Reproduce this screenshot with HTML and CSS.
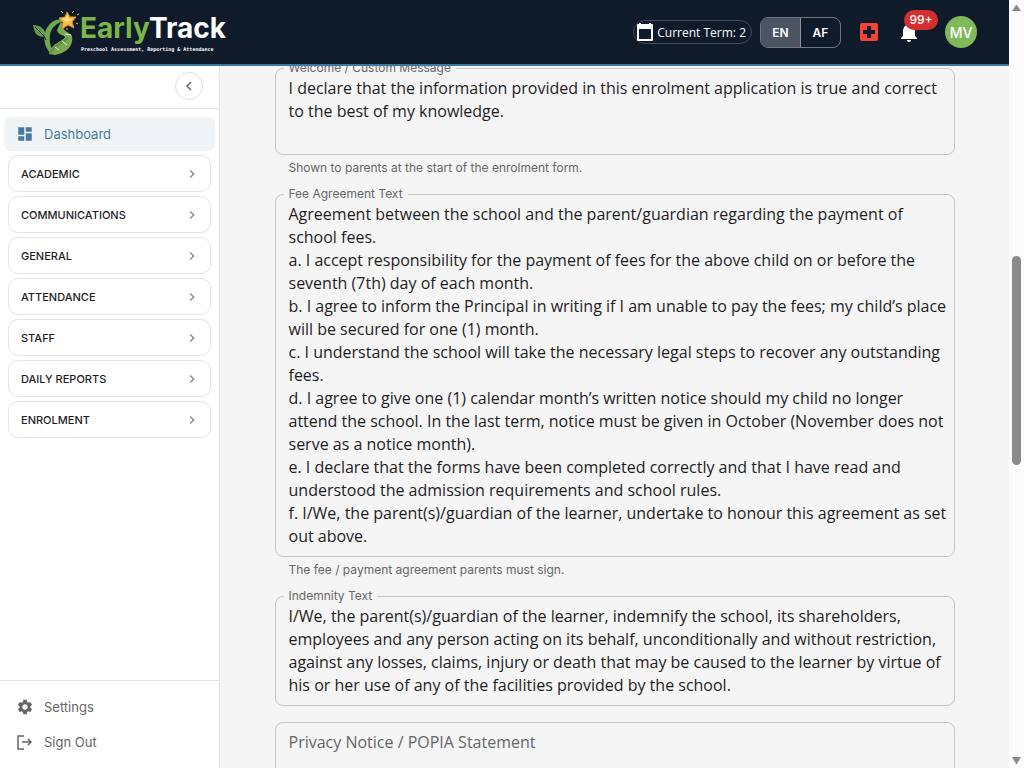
FILE: index.html
```
<!DOCTYPE html>
<html lang="en">
<head>
  <meta charset="UTF-8">
  <meta name="viewport" content="width=device-width, initial-scale=1">
  <title>EarlyTrack - Enrolment Settings</title>
  <link rel="stylesheet" href="styles.css">
</head>
<body>
  <div class="app">
    <header class="topbar">
      <a href="#" class="logo">
        <svg class="logo-mark" width="48" height="48" viewBox="0 0 48 48" aria-hidden="true">
          <path d="M19 46C11 38 10 25 17 17C20 13 25 11 31 11L32 13C24 15 19 20 18 27C17 34 19 41 23 46Z" fill="#6fa84f"/>
          <path d="M12 29C4 29 2 24 1 17C8 17 13 21 14 27Z" fill="#5f9c48"/>
          <path d="M3 19L12 28L14 32" fill="none" stroke="#12202c" stroke-width="1"/>
          <path d="M29 14L25 22C26 27 32 27 33 29C32 33 19 35 17 46L23 47C35 45 42 37 40 28C38 24 29 23 32 17Z" fill="#78a850"/>
          <path d="M19 45C21 36 34 35 36 29" fill="none" stroke="#5f8c47" stroke-width="2"/>
          <path d="M33 26L39 27M30 33L35 37M23 39L27 42" stroke="#e7eadf" stroke-width="1"/>
          <path d="M35 4L38 9L44 9L40 14L42 20L36 17L30 21L31 14L27 10L33 9Z" fill="#f5b944" stroke="#d98e2d" stroke-width="1" stroke-linejoin="round"/>
          <path d="M35 7L37 11L41 11L35 14L30 11L34 10Z" fill="#ffe18b"/>
          <path d="M29 3L31 5M42 3L40 5M44 15L46 16M35 20V22M45 7L47 6" stroke="#e9b847" stroke-width="1"/>
        </svg>
        <span class="logo-text">
          <span class="logo-name"><span class="logo-early">Early</span>Track</span>
          <span class="logo-tagline">Preschool Assessment, Reporting &amp; Attendance</span>
        </span>
      </a>

      <div class="topbar-actions">
        <button class="term" type="button">
          <svg width="18" height="20" viewBox="0 0 18 20" aria-hidden="true">
            <path d="M2 3H16V18H2Z" fill="none" stroke="#fff" stroke-width="2" stroke-linejoin="round"/>
            <path d="M1 3H17V7H1ZM3 1H5V4H3ZM13 1H15V4H13Z" fill="#fff"/>
          </svg>
          Current Term: 2
        </button>
        <div class="lang">
          <button type="button" class="active">EN</button>
          <button type="button">AF</button>
        </div>
        <button class="icon-button medical" type="button" aria-label="Medical">
          <svg width="24" height="24" viewBox="0 0 24 24">
            <path d="M19 3H5c-1.100 0-2 .9-2 2v14c0 1.100.9 2 2 2h14c1.100 0 2-.9 2-2V5c0-1.100-.9-2-2-2zm-1 11h-4v4h-4v-4H6v-4h4V6h4v4h4v4z" fill="#f44336"/>
          </svg>
        </button>
        <button class="icon-button bell" type="button" aria-label="Notifications">
          <svg width="24" height="24" viewBox="0 0 24 24">
            <path d="M12 22c1.100 0 2-.9 2-2h-4c0 1.100.89 2 2 2zm6-6v-5c0-3.070-1.640-5.640-4.500-6.320V4c0-.83-.67-1.500-1.500-1.500s-1.500.67-1.500 1.500v.68C7.630 5.360 6 7.920 6 11v5l-2 2v1h16v-1l-2-2z" fill="#fff"/>
          </svg>
          <span class="badge">99+</span>
        </button>
        <button class="avatar" type="button">MV</button>
      </div>
    </header>

    <div class="layout">
      <aside class="sidebar">
        <div class="sidebar-top">
          <button class="collapse" type="button" aria-label="Collapse menu">
            <svg width="16" height="16" viewBox="0 0 16 16"><path d="M10 4L6 8L10 12" fill="none" stroke="#666" stroke-width="1.500"/></svg>
          </button>
        </div>

        <nav class="menu">
          <a href="#" class="nav-link current">
            <svg width="18" height="18" viewBox="0 0 24 24"><path d="M3 13h8V3H3v10zm0 8h8v-6H3v6zm10 0h8V11h-8v10zm0-18v6h8V3h-8z" fill="#457b9d"/></svg>
            Dashboard
          </a>
          <button class="group" type="button">ACADEMIC <svg width="16" height="16" viewBox="0 0 24 24"><path d="M10 6L8.590 7.410 13.170 12l-4.580 4.590L10 18l6-6z"/></svg></button>
          <button class="group" type="button">COMMUNICATIONS <svg width="16" height="16" viewBox="0 0 24 24"><path d="M10 6L8.590 7.410 13.170 12l-4.580 4.590L10 18l6-6z"/></svg></button>
          <button class="group" type="button">GENERAL <svg width="16" height="16" viewBox="0 0 24 24"><path d="M10 6L8.590 7.410 13.170 12l-4.580 4.590L10 18l6-6z"/></svg></button>
          <button class="group" type="button">ATTENDANCE <svg width="16" height="16" viewBox="0 0 24 24"><path d="M10 6L8.590 7.410 13.170 12l-4.580 4.590L10 18l6-6z"/></svg></button>
          <button class="group" type="button">STAFF <svg width="16" height="16" viewBox="0 0 24 24"><path d="M10 6L8.590 7.410 13.170 12l-4.580 4.590L10 18l6-6z"/></svg></button>
          <button class="group" type="button">DAILY REPORTS <svg width="16" height="16" viewBox="0 0 24 24"><path d="M10 6L8.590 7.410 13.170 12l-4.580 4.590L10 18l6-6z"/></svg></button>
          <button class="group" type="button">ENROLMENT <svg width="16" height="16" viewBox="0 0 24 24"><path d="M10 6L8.590 7.410 13.170 12l-4.580 4.590L10 18l6-6z"/></svg></button>
        </nav>

        <div class="sidebar-bottom">
          <a href="#" class="nav-link">
            <svg width="18" height="18" viewBox="0 0 24 24"><path fill="#666" d="M19.140 12.940c.04-.3.06-.61.06-.94 0-.32-.02-.64-.07-.94l2.030-1.580c.18-.14.23-.41.12-.61l-1.920-3.320c-.12-.22-.37-.29-.59-.22l-2.390.96c-.5-.38-1.030-.7-1.620-.94l-.36-2.540c-.04-.24-.24-.41-.48-.41h-3.840c-.24 0-.43.17-.47.41l-.36 2.540c-.59.24-1.130.57-1.620.94l-2.390-.96c-.22-.08-.47 0-.59.22L2.740 8.870c-.12.21-.08.47.12.61l2.030 1.580c-.05.3-.09.63-.09.94s.02.64.07.94l-2.030 1.580c-.18.14-.23.41-.12.61l1.920 3.320c.12.22.37.29.59.22l2.390-.96c.5.38 1.030.7 1.620.94l.36 2.540c.05.24.24.41.48.41h3.840c.24 0 .44-.17.47-.41l.36-2.540c.59-.24 1.130-.56 1.620-.94l2.390.96c.22.08.47 0 .59-.22l1.920-3.320c.12-.22.07-.47-.12-.61l-2.010-1.580zM12 15.600c-1.980 0-3.600-1.620-3.600-3.600s1.620-3.600 3.600-3.600 3.600 1.620 3.600 3.600-1.620 3.600-3.600 3.600z"/></svg>
            Settings
          </a>
          <a href="#" class="nav-link">
            <svg width="18" height="18" viewBox="0 0 18 18"><path d="M8 3H2V16H8M6 9H15M12 6L15 9L12 12" fill="none" stroke="#666" stroke-width="1.500"/></svg>
            Sign Out
          </a>
        </div>
      </aside>

      <main class="content">
        <form class="form">
          <div class="field">
            <label for="welcome">Welcome / Custom Message</label>
            <textarea id="welcome" rows="3">I declare that the information provided in this enrolment application is true and correct to the best of my knowledge.</textarea>
            <p class="help">Shown to parents at the start of the enrolment form.</p>
          </div>
          <div class="field">
            <label for="fees">Fee Agreement Text</label>
            <textarea id="fees" rows="15">Agreement between the school and the parent/guardian regarding the payment of school fees.
a. I accept responsibility for the payment of fees for the above child on or before the seventh (7th) day of each month.
b. I agree to inform the Principal in writing if I am unable to pay the fees; my child’s place will be secured for one (1) month.
c. I understand the school will take the necessary legal steps to recover any outstanding fees.
d. I agree to give one (1) calendar month’s written notice should my child no longer attend the school. In the last term, notice must be given in October (November does not serve as a notice month).
e. I declare that the forms have been completed correctly and that I have read and understood the admission requirements and school rules.
f. I/We, the parent(s)/guardian of the learner, undertake to honour this agreement as set out above.</textarea>
            <p class="help">The fee / payment agreement parents must sign.</p>
          </div>
          <div class="field">
            <label for="indemnity">Indemnity Text</label>
            <textarea id="indemnity" rows="4">I/We, the parent(s)/guardian of the learner, indemnify the school, its shareholders, employees and any person acting on its behalf, unconditionally and without restriction, against any losses, claims, injury or death that may be caused to the learner by virtue of his or her use of any of the facilities provided by the school.</textarea>
          </div>
          <div class="field">
            <textarea id="privacy" rows="3" placeholder="Privacy Notice / POPIA Statement" aria-label="Privacy Notice / POPIA Statement"></textarea>
          </div>
        </form>
      </main>
    </div>
  </div>

  <div class="scrollbar" aria-hidden="true">
    <svg width="15" height="15" viewBox="0 0 15 15"><path d="M3 11H12L8 5H7Z" fill="#8b8b8b"/></svg>
    <div class="track">
      <div class="thumb"></div>
    </div>
    <svg width="15" height="15" viewBox="0 0 15 15"><path d="M3 4H12L8 11H7Z" fill="#8b8b8b"/></svg>
  </div>
</body>
</html>
```
FILE: styles.css
```
* {
  box-sizing: border-box;
}

body {
  margin: 0;
  height: 100vh;
  display: flex;
  overflow: hidden;
  font-family: Inter, "Open Sans", sans-serif;
  background: #f5f5f5;
  color: #1d1d1f;
}

button {
  font-family: inherit;
  background: none;
  border: none;
  padding: 0;
  cursor: pointer;
}

a {
  text-decoration: none;
}

.app {
  flex: 1;
  min-width: 0;
  display: flex;
  flex-direction: column;
}

/* header */
.topbar {
  position: relative;
  z-index: 2;
  flex: none;
  height: 66px;
  padding: 0 32px;
  display: flex;
  align-items: center;
  justify-content: space-between;
  background: #0f1a2b;
  border-bottom: 2px solid #3b78a0;
}

.logo {
  display: flex;
  align-items: center;
  color: #fff;
}

.logo-text {
  display: flex;
  flex-direction: column;
}

.logo-name {
  font-size: 28px;
  font-weight: 700;
  line-height: 34px;
}

.logo-early {
  color: #7ab648;
}

.logo-tagline {
  padding-left: 1px;
  font-family: "DejaVu Sans Mono", monospace;
  font-size: 5px;
  font-weight: 700;
  line-height: 8px;
}

.topbar-actions {
  display: flex;
  align-items: center;
}

.term {
  display: flex;
  align-items: center;
  gap: 3px;
  height: 24px;
  padding: 0 5px 0 2px;
  margin-right: 8px;
  border: 1px solid #424b58;
  border-radius: 12px;
  color: #fff;
  font-family: "Open Sans", sans-serif;
  font-size: 12px;
  font-weight: 500;
  white-space: nowrap;
}

.lang {
  display: flex;
  height: 31px;
  margin-right: 16px;
  border: 1px solid #6f7681;
  border-radius: 8px;
  overflow: hidden;
}

.lang button {
  width: 39px;
  color: #fff;
  font-size: 12px;
  font-weight: 600;
}

.lang .active {
  width: 40px;
  background: #4b5463;
  border-right: 1px solid #8d939c;
}

.icon-button {
  position: relative;
  width: 24px;
  height: 24px;
  margin-right: 16px;
}

.icon-button svg {
  display: block;
}

.bell {
  margin-right: 24px;
}

.badge {
  position: absolute;
  top: -10px;
  left: 7px;
  width: 34px;
  border-radius: 10px;
  background: #d32f2f;
  color: #fff;
  font-size: 12px;
  font-weight: 500;
  line-height: 20px;
  text-align: center;
}

.avatar {
  width: 32px;
  height: 32px;
  border-radius: 50%;
  background: #7fba5a;
  color: #fff;
  font-size: 14px;
  font-weight: 500;
}

/* sidebar */
.layout {
  flex: 1;
  min-height: 0;
  display: flex;
}

.sidebar {
  flex: none;
  width: 220px;
  display: flex;
  flex-direction: column;
  background: #fff;
  border-right: 1px solid #e4e4e4;
}

.sidebar-top {
  display: flex;
  justify-content: flex-end;
  padding: 6px 16px 8px;
  border-bottom: 1px solid #e4e4e4;
}

.collapse {
  display: grid;
  place-items: center;
  width: 28px;
  height: 28px;
  border: 1px solid #e0e0e0;
  border-radius: 50%;
}

.menu {
  flex: 1;
  display: flex;
  flex-direction: column;
  gap: 4px;
  padding: 8px 4px;
}

.nav-link {
  display: flex;
  align-items: center;
  gap: 10px;
  height: 34px;
  padding: 0 12px;
  border-radius: 8px;
  color: #666;
  font-size: 13px;
}

.current {
  background: #f0f4f7;
  color: #457b9d;
}

.group {
  display: flex;
  align-items: center;
  justify-content: space-between;
  height: 37px;
  margin: 0 4px;
  padding: 0 10px 0 12px;
  border: 1px solid #e4e4e4;
  border-radius: 10px;
  color: #1d1d1f;
  font-size: 11px;
  font-weight: 500;
}

.group svg {
  fill: #888;
}

.sidebar-bottom {
  display: flex;
  flex-direction: column;
  gap: 1px;
  padding: 9px 4px;
  border-top: 1px solid #e4e4e4;
}

/* form */
.content {
  flex: 1;
  min-width: 0;
  padding: 2px 24px;
  overflow: hidden;
}

.form {
  max-width: 680px;
  margin: 0 auto;
}

.field {
  position: relative;
  margin-bottom: 16px;
}

.field label {
  position: absolute;
  top: -8px;
  left: 9px;
  padding: 0 5px;
  background: #f5f5f5;
  color: #666;
  font-size: 12px;
  line-height: 16px;
}

.field textarea {
  display: block;
  width: 100%;
  padding: 8px 4px 8px 13px;
  border: 1px solid #c6c6c6;
  border-radius: 8px;
  background: transparent;
  color: #1d1d1f;
  font-family: "Open Sans", sans-serif;
  font-size: 16px;
  line-height: 23px;
  resize: none;
  overflow: hidden;
  outline: none;
}

.field textarea::placeholder {
  color: #666;
}

.help {
  margin: 3px 14px 0;
  color: #666;
  font-size: 12px;
  line-height: 20px;
}

/* window scrollbar */
.scrollbar {
  flex: none;
  width: 15px;
  display: flex;
  flex-direction: column;
  background: #fcfcfc;
}

.track {
  flex: 1;
  padding: 0 3px;
  display: grid;
  grid-template-rows: 241fr 209fr 288fr;
}

.thumb {
  grid-row: 2;
  border-radius: 5px;
  background: #8b8b8b;
}
```
